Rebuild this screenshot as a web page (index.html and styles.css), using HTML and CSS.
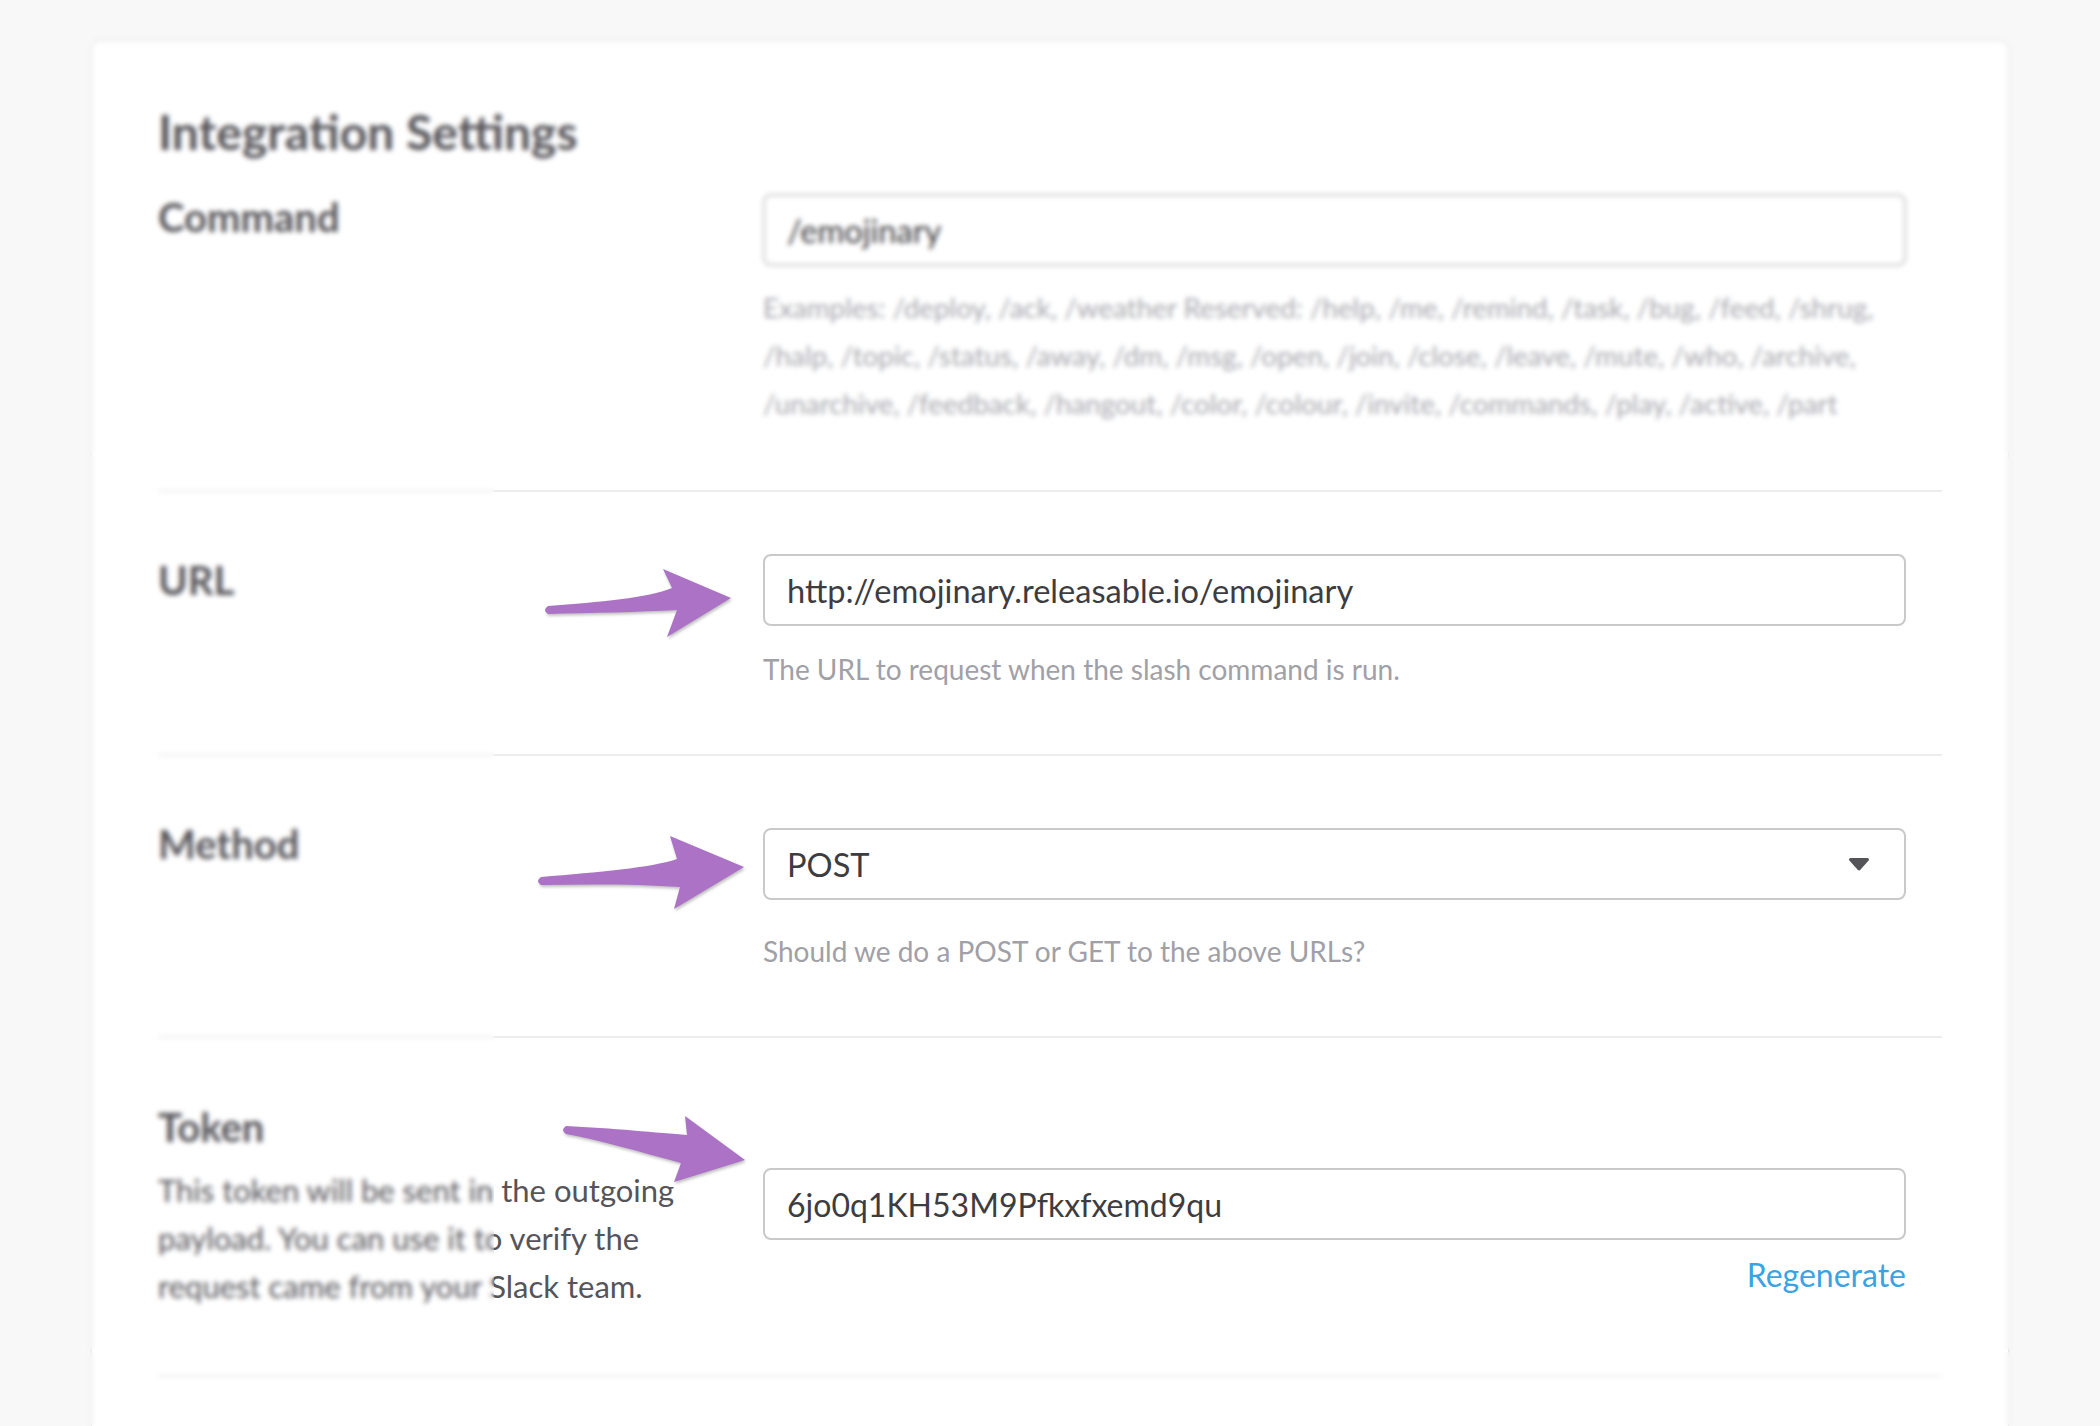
FILE: index.html
```html
<!DOCTYPE html>
<html lang="en">
<head>
<meta charset="utf-8">
<title>Integration Settings</title>
<link rel="stylesheet" href="styles.css">
</head>
<body>
<main class="card">
  <h2 class="title">Integration Settings</h2>

  <div class="row row-command">
    <div class="label-col"><div class="label">Command</div></div>
    <div class="field-col">
      <div class="input">/emojinary</div>
      <p class="help">
        <span class="line">Examples: /deploy, /ack, /weather Reserved: /help, /me, /remind, /task, /bug, /feed, /shrug,</span>
        <span class="line">/halp, /topic, /status, /away, /dm, /msg, /open, /join, /close, /leave, /mute, /who, /archive,</span>
        <span class="line">/unarchive, /feedback, /hangout, /color, /colour, /invite, /commands, /play, /active, /part</span>
      </p>
    </div>
  </div>

  <div class="row">
    <div class="label-col"><div class="label">URL</div></div>
    <div class="field-col">
      <div class="input">http://emojinary.releasable.io/emojinary</div>
      <p class="help">The URL to request when the slash command is run.</p>
    </div>
  </div>

  <div class="row">
    <div class="label-col"><div class="label">Method</div></div>
    <div class="field-col">
      <div class="input select">
        <span>POST</span>
        <svg class="caret" width="22" height="14" viewBox="0 0 22 14"><path d="M2.5 2.5 H19.5 L11 12 Z" fill="#555459" stroke="#555459" stroke-width="3" stroke-linejoin="round"/></svg>
      </div>
      <p class="help help-method">Should we do a POST or GET to the above URLs?</p>
    </div>
  </div>

  <div class="row row-token">
    <div class="label-col">
      <div class="label">Token</div>
      <p class="desc">This token will be sent in the outgoing payload. You can use it to verify the request came from your Slack team.</p>
    </div>
    <div class="field-col">
      <div class="input token-input">6jo0q1KH53M9Pfkxfxemd9qu</div>
      <div class="regen"><a class="link">Regenerate</a></div>
    </div>
  </div>
</main>

<div class="blur blur-top"></div>
<div class="blur blur-left"></div>
<div class="blur blur-right"></div>
<div class="blur blur-bottom"></div>

<svg class="arrows" width="2100" height="1426" viewBox="0 0 2100 1426">
  <g fill="#ab72c5">
    <path d="M548 606 C600 602 648 598 672 588 L663 569 L731 598 L667 637 L677 610 C640 612 590 613 548 614 Q542 610 548 606 Z"/>
    <path d="M541 877 C600 872 650 868 677 859 L670 836 L744 867 L674 909 L680 887 C640 884 590 884 541 885 Q535 881 541 877 Z"/>
    <path d="M566 1126 C610 1128 660 1133 687 1135 L685 1116 L745 1160 L674 1182 L681 1163 C640 1152 600 1140 566 1134 Q560 1130 566 1126 Z"/>
  </g>
</svg>
</body>
</html>
```

FILE: styles.css
```css
html, body {
  margin: 0;
  padding: 0;
}

body {
  width: 2100px;
  height: 1426px;
  overflow: hidden;
  position: relative;
  background: #f8f8f8;
  font-family: Lato, "Open Sans", "Liberation Sans", sans-serif;
  color: #555459;
}

.card {
  box-sizing: border-box;
  width: 1918px;
  margin: 40px 0 0 91px;
  padding: 62px 66px 200px;
  background: #ffffff;
  border: 1px solid #e6e6e6;
  border-radius: 10px;
  box-shadow: 0 0 4px rgba(0, 0, 0, 0.05);
}

.title {
  margin: 0;
  font-size: 48px;
  line-height: 58px;
  font-weight: 700;
  color: #555459;
}

.row {
  display: grid;
  grid-template-columns: 605px 1fr;
  padding: 62px 0 61px;
  border-bottom: 2px solid #ededed;
}

.row-command {
  padding-top: 33px;
  padding-bottom: 62px;
}

.row-token {
  padding-bottom: 65px;
}

.label {
  margin-top: 3px;
  font-size: 40px;
  line-height: 46px;
  font-weight: 700;
  color: #555459;
}

.row-command .label {
  margin-top: 0;
}

.row-token .label {
  margin-top: 4px;
}

.desc {
  margin: 16px 0 0;
  max-width: 580px;
  font-size: 31px;
  line-height: 48px;
  color: #555459;
}

.field-col {
  padding-right: 36px;
}

.input {
  box-sizing: border-box;
  height: 72px;
  display: flex;
  align-items: center;
  padding: 0 22px;
  border: 2px solid #c9c9c9;
  border-radius: 8px;
  background: #ffffff;
  font-size: 32.6px;
  color: #3d3c40;
  white-space: nowrap;
}

.select {
  margin-top: 10px;
  justify-content: space-between;
  padding-right: 34px;
}

.caret {
  display: block;
}

.token-input {
  margin-top: 68px;
  font-size: 32px;
}

.help {
  margin: 19px 0 0;
  font-size: 28px;
  line-height: 48px;
  color: #a0a0a6;
}

.row-command .help {
  margin-top: 18px;
  font-size: 27.8px;
  color: #a8a8ae;
}

.help .line {
  display: block;
  white-space: nowrap;
}

.help-method {
  margin-top: 27px;
}

.regen {
  margin-top: 11px;
  text-align: right;
  font-size: 32px;
  line-height: 48px;
}

.link {
  color: #3aa3e3;
  text-decoration: none;
}

.blur {
  position: absolute;
  -webkit-backdrop-filter: blur(2.5px);
  backdrop-filter: blur(2.5px);
}

.blur-top {
  left: 0;
  top: 0;
  width: 2100px;
  height: 455px;
}

.blur-left {
  left: 0;
  top: 455px;
  width: 494px;
  height: 895px;
}

.blur-right {
  left: 1985px;
  top: 455px;
  width: 115px;
  height: 895px;
}

.blur-bottom {
  left: 0;
  top: 1352px;
  width: 2100px;
  height: 74px;
}

.arrows {
  position: absolute;
  left: 0;
  top: 0;
  pointer-events: none;
  filter: drop-shadow(1px 2px 1.5px rgba(0, 0, 0, 0.25));
}
```
